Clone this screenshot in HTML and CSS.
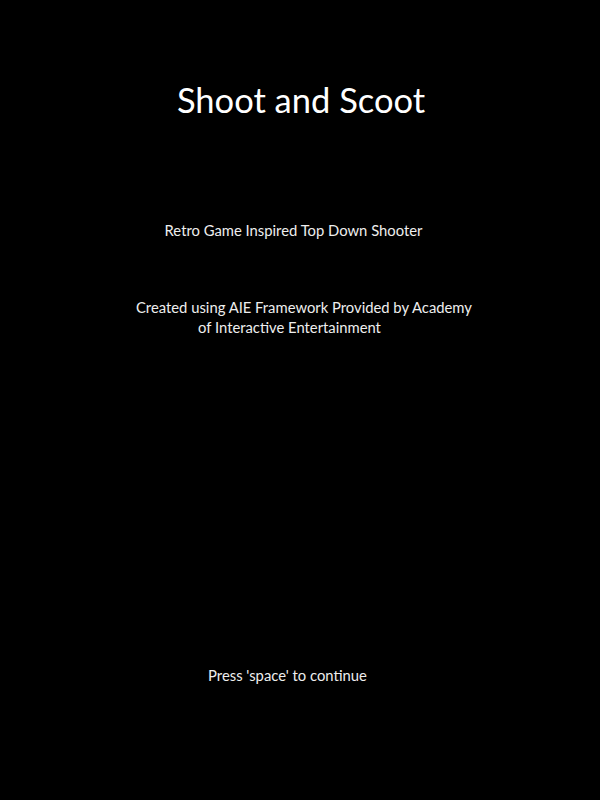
FILE: index.html
```html
<!DOCTYPE html>
<html>
<head>
<meta charset="utf-8">
<link rel="stylesheet" href="styles.css">
</head>
<body>
<main class="screen">
  <h1 class="title">Shoot and Scoot</h1>
  <p class="tagline">Retro Game Inspired Top Down Shooter</p>
  <p class="credits"><span class="credits-line1">Created using AIE Framework Provided by Academy</span><br><span class="credits-line2">of Interactive Entertainment</span></p>
  <p class="prompt">Press 'space' to continue</p>
</main>
</body>
</html>
```

FILE: styles.css
```css
html, body {
  margin: 0;
  padding: 0;
  background: #000;
}
.screen {
  width: 600px;
  height: 800px;
  display: flex;
  flex-direction: column;
  align-items: center;
  font-family: Lato, "Open Sans", sans-serif;
  color: #fff;
}
.title {
  margin: 80px 0 0 2px;
  font-size: 34.5px;
  font-weight: 400;
  line-height: 40px;
}
.tagline {
  margin: 100px 0 0 -13px;
  font-size: 14.8px;
  line-height: 20px;
  color: #eee;
}
.credits {
  margin: 57px 0 0 8px;
  font-size: 14.8px;
  line-height: 20px;
  color: #eee;
  text-align: left;
}
.credits-line2 {
  padding-left: 62px;
}
.prompt {
  margin: 328px 0 0 -25px;
  font-size: 14.8px;
  line-height: 20px;
  color: #eee;
}
```
